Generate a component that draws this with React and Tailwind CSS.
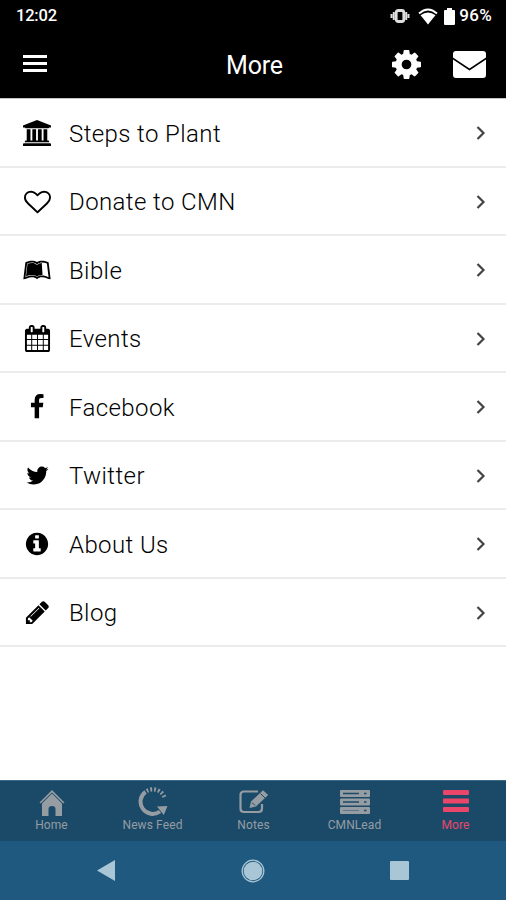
import React from "react";
import { FaLeanpub } from "react-icons/fa";

const icons = {
  bank: {
    box: "0 0 1920 1792",
    size: "w-[28px] h-[26px]",
    d: "M960 0l960 384v128h-128q0 26-20.5 45t-48.5 19h-1526q-28 0-48.5-19t-20.5-45h-128v-128zm-704 640h256v768h128v-768h256v768h128v-768h256v768h128v-768h256v768h59q28 0 48.5 19t20.5 45v64h-1664v-64q0-26 20.5-45t48.5-19h59v-768zm1595 960q28 0 48.5 19t20.5 45v128h-1920v-128q0-26 20.5-45t48.5-19h1782z",
  },
  heart: {
    box: "0 0 1792 1792",
    size: "w-[27px] h-[26px]",
    d: "M1664 596q0-81-21.5-143t-55-98.5-81.5-59.5-94-31-98-8-112 25.5-110.5 64-86.5 72-60 61.5q-18 22-49 22t-49-22q-24-28-60-61.5t-86.5-72-110.5-64-112-25.5-98 8-94 31-81.5 59.5-55 98.5-21.5 143q0 168 187 355l581 560 580-559q188-188 188-356zm128 0q0 221-229 450l-623 600q-18 18-44 18t-44-18l-624-602q-10-8-27.5-26t-55.5-65.5-68-97.5-53.5-121-23.5-138q0-220 127-344t351-124q62 0 126.5 21.5t120 58 95.5 68.5 76 68q36-36 76-68t95.5-68.5 120-58 126.5-21.5q224 0 351 124t127 344z",
  },
  calendar: {
    box: "0 0 1792 1792",
    size: "w-[27px] h-[27px]",
    d: "M192 1664h288v-288h-288v288zm352 0h320v-288h-320v288zm-352-352h288v-320h-288v320zm352 0h320v-320h-320v320zm-352-384h288v-288h-288v288zm736 736h320v-288h-320v288zm-384-736h320v-288h-320v288zm768 736h288v-288h-288v288zm-384-352h320v-320h-320v320zm-352-864v-288q0-13-9.5-22.5t-22.5-9.5h-64q-13 0-22.5 9.5t-9.5 22.5v288q0 13 9.5 22.5t22.5 9.5h64q13 0 22.5-9.5t9.5-22.5zm736 864h288v-320h-288v320zm-384-384h320v-288h-320v288zm384 0h288v-288h-288v288zm32-480v-288q0-13-9.5-22.5t-22.5-9.5h-64q-13 0-22.5 9.5t-9.5 22.5v288q0 13 9.5 22.5t22.5 9.5h64q13 0 22.5-9.5t9.5-22.5zm384-64v1280q0 52-38 90t-90 38h-1408q-52 0-90-38t-38-90v-1280q0-52 38-90t90-38h128v-96q0-66 47-113t113-47h64q66 0 113 47t47 113v96h384v-96q0-66 47-113t113-47h64q66 0 113 47t47 113v96h128q52 0 90 38t38 90z",
  },
  facebook: {
    box: "0 0 1792 1792",
    size: "w-[26px] h-[26px]",
    d: "M1343 12v264h-157q-86 0-116 36t-30 108v189h293l-39 296h-254v759h-306v-759h-255v-296h255v-218q0-186 104-288.5t277-102.5q147 0 228 12z",
  },
  twitter: {
    box: "0 0 1792 1792",
    size: "w-[25px] h-[25px]",
    d: "M1684 408q-67 98-162 167 1 14 1 42 0 130-38 259.5t-115.5 248.5-184.5 210.5-258 146-323 54.5q-271 0-496-145 35 4 78 4 225 0 401-138-105-2-188-64.5t-114-159.5q33 5 61 5 43 0 85-11-112-23-185.5-111.5t-73.5-205.5v-4q68 38 146 41-66-44-105-115t-39-154q0-88 44-163 121 149 294.5 238.5t371.5 99.5q-8-38-8-74 0-134 94.5-228.5t228.5-94.5q140 0 236 102 109-21 205-78-37 115-142 178 93-10 186-50z",
  },
  info: {
    box: "0 0 1792 1792",
    size: "w-[26px] h-[26px]",
    d: "M1152 1376v-160q0-14-9-23t-23-9h-96v-512q0-14-9-23t-23-9h-320q-14 0-23 9t-9 23v160q0 14 9 23t23 9h96v320h-96q-14 0-23 9t-9 23v160q0 14 9 23t23 9h448q14 0 23-9t9-23zm-128-896v-160q0-14-9-23t-23-9h-192q-14 0-23 9t-9 23v160q0 14 9 23t23 9h192q14 0 23-9t9-23zm640 416q0 209-103 385.5t-279.5 279.5-385.5 103-385.5-103-279.5-279.5-103-385.5 103-385.5 279.5-279.5 385.5-103 385.5 103 279.5 279.5 103 385.5z",
  },
  pencil: {
    box: "0 0 1792 1792",
    size: "w-[27px] h-[27px]",
    d: "M491 1536l91-91-235-235-91 91v107h128v128h107zm523-928q0-22-22-22-10 0-17 7l-542 542q-7 7-7 17 0 22 22 22 10 0 17-7l542-542q7-7 7-17zm-54-192l416 416-832 832h-416v-416zm683 96q0 53-37 90l-166 166-416-416 166-165q36-38 90-38 53 0 91 38l235 234q37 39 37 91z",
  },
  cog: {
    box: "128 128 1536 1536",
    size: "w-[29px] h-[29px]",
    d: "M1152 896q0-106-75-181t-181-75-181 75-75 181 75 181 181 75 181-75 75-181zm512-109v222q0 12-8 23t-20 13l-185 28q-19 54-39 91 35 50 107 138 10 12 10 25t-9 23q-27 37-99 108t-94 71q-12 0-26-9l-138-108q-44 23-91 38-16 136-29 186-7 28-36 28h-222q-14 0-24.5-8.5t-11.5-21.5l-28-184q-49-16-90-37l-141 107q-10 9-25 9-14 0-25-11-126-114-165-168-7-10-7-23 0-12 8-23 15-21 51-66.5t54-70.5q-27-50-41-99l-183-27q-13-2-21-12.5t-8-23.5v-222q0-12 8-23t19-13l186-28q14-46 39-92-40-57-107-138-10-12-10-24 0-10 9-23 26-36 98.5-107.5t94.5-71.5q13 0 26 10l138 107q44-23 91-38 16-136 29-186 7-28 36-28h222q14 0 24.5 8.5t11.5 21.5l28 184q49 16 90 37l142-107q9-9 24-9 13 0 25 10 129 119 165 170 7 8 7 22 0 12-8 23-15 21-51 66.5t-54 70.5q26 50 41 98l183 28q13 2 21 12.5t8 23.5z",
  },
};

const Icon = ({ name }) => {
  const icon = icons[name];
  return (
    <svg viewBox={icon.box} className={icon.size} fill="currentColor" preserveAspectRatio="none">
      <path d={icon.d} />
    </svg>
  );
};

const menu = [
  { label: "Steps to Plant", icon: <Icon name="bank" /> },
  { label: "Donate to CMN", icon: <Icon name="heart" /> },
  { label: "Bible", icon: <FaLeanpub className="w-[28px] h-[26px]" /> },
  { label: "Events", icon: <Icon name="calendar" /> },
  { label: "Facebook", icon: <Icon name="facebook" /> },
  { label: "Twitter", icon: <Icon name="twitter" /> },
  { label: "About Us", icon: <Icon name="info" /> },
  { label: "Blog", icon: <Icon name="pencil" /> },
];

const StatusBar = () => (
  <div className="flex h-8 items-center justify-between pl-[16px] pr-[14px] text-[16.5px] font-medium">
    <span className="tracking-[-0.2px]">12:02</span>
    <div className="flex items-center">
      <svg viewBox="0 0 20 14" className="w-5 h-[14px] mr-[8px]" fill="none" stroke="#ddd">
        <path d="M1.500 5v4M3.800 3v8M16.200 3v8M18.500 5v4" strokeWidth="2" />
        <rect x="6.200" y="1.500" width="7.600" height="11" rx="2" strokeWidth="2.800" />
      </svg>
      <svg viewBox="0 0 20 17" className="w-5 h-[17px] mr-[6px]">
        <path d="M1 5.500Q10-2.500 19 5.500" fill="none" stroke="#fff" strokeWidth="1.800" />
        <path d="M2.500 7.300Q10 1.500 17.500 7.300L10 16.500Z" fill="#fff" />
      </svg>
      <svg viewBox="0 0 11 17" className="w-[11px] h-[17px] mr-[4px]" fill="#fff">
        <path d="M3 0h5v2h2a1 1 0 0 1 1 1v13a1 1 0 0 1-1 1H1a1 1 0 0 1-1-1V3a1 1 0 0 1 1-1h2z" />
      </svg>
      <span className="text-[17px] tracking-[0.3px]">96%</span>
    </div>
  </div>
);

const Header = () => (
  <div className="grid h-[66px] grid-cols-[1fr_auto_1fr] items-center pl-[23px] pr-5">
    <div className="-mt-[3px] flex w-6 flex-col gap-1">
      <span className="h-[3px] bg-white" />
      <span className="h-[3px] bg-white" />
      <span className="h-[3px] bg-white" />
    </div>
    <h1 className="pt-[2px] text-[25px] leading-8 tracking-[-0.2px]">More</h1>
    <div className="-mt-[2px] flex items-center justify-end gap-8">
      <Icon name="cog" />
      <svg viewBox="0 0 33 27" className="w-[33px] h-[27px]" fill="#fff">
        <path d="M3 0h27a3 3 0 0 1 3 3v3.500L16.500 17.500 0 6.500V3a3 3 0 0 1 3-3z" />
        <path d="M0 8.500L16.500 19.500 33 8.500V24a3 3 0 0 1-3 3H3a3 3 0 0 1-3-3z" />
      </svg>
    </div>
  </div>
);

const HomeIcon = () => (
  <svg viewBox="0 0 26 26" className="w-[26px] h-[26px]" fill="currentColor">
    <path d="M13 0L25.500 12.500l-1.200 1.100L13 2.600 1.700 13.600.5 12.500z" />
    <path d="M13 3.600l10 9.900V26h-6.500v-7q0-3-3.500-3t-3.500 3v7H3V13.500z" />
  </svg>
);

const FeedIcon = () => (
  <svg viewBox="0 0 30 31" className="-mt-1 w-[30px] h-[31px]" fill="none" stroke="currentColor">
    <path d="M7.500 5.800A12.200 12.200 0 0 0 22 25.500" strokeWidth="4" />
    <path d="M19 20.500l10.500-.5-3.700 9z" fill="currentColor" stroke="none" />
    <path d="M8.800 5A12.200 12.200 0 0 1 26.800 12.500" strokeWidth="4.200" strokeDasharray="1.800 2" />
  </svg>
);

const NotesIcon = () => (
  <svg viewBox="0 0 30 24" className="w-[30px] h-6" fill="none" stroke="currentColor">
    <path d="M19 1.500H5Q1.500 1.500 1.500 5v13.500Q1.500 22 5 22h14.500Q23 22 23 18.500V14" strokeWidth="2.200" />
    <path d="M10.500 18l1.500-6.500L24 .3 29.200 5 17 16.500z" fill="currentColor" stroke="none" />
    <path d="M21.500 3.500l4.500 4.500M13 12.500l3 3" stroke="#1b4a69" strokeWidth="1" />
  </svg>
);

const ServerIcon = () => (
  <svg viewBox="0 0 30 24" className="w-[30px] h-6" fill="currentColor">
    <rect width="30" height="7" rx="1" />
    <rect y="8.500" width="30" height="7" rx="1" />
    <rect y="17" width="30" height="7" rx="1" />
    <path d="M3 3.500h16M3 12h16M24 3.500h2.500M24 12h2.500M24 20.500h2.500" stroke="#1b4a69" strokeWidth="1.500" />
    <path d="M3 20.500h16" stroke="#5b788c" strokeWidth="1" />
  </svg>
);

const MoreIcon = () => (
  <svg viewBox="0 0 26 22" className="w-[26px] h-[22px]" fill="currentColor">
    <rect width="26" height="5" rx="1" />
    <rect y="8.500" width="26" height="5" rx="1" />
    <rect y="17" width="26" height="5" rx="1" />
  </svg>
);

const tabs = [
  { label: "Home", icon: <HomeIcon /> },
  { label: "News Feed", icon: <FeedIcon /> },
  { label: "Notes", icon: <NotesIcon /> },
  { label: "CMNLead", icon: <ServerIcon /> },
  { label: "More", icon: <MoreIcon />, active: true },
];

const App = () => {
  return (
    <div className="flex h-[900px] w-[506px] flex-col overflow-hidden bg-white font-['Roboto',sans-serif]">
      <div className="h-[99px] border-b border-[#c9c4c6] bg-black text-white">
        <StatusBar />
        <Header />
      </div>

      <div className="flex-1 text-black">
        {menu.map((item, index) => (
          <div className="flex h-[68.5px] items-center border-b-2 border-[#ebebeb] pr-[20px]" key={index}>
            <div className="flex w-[74px] justify-center pt-[2px]">{item.icon}</div>
            <p className="-ml-[5px] flex-1 pt-[3px] text-[24px] font-light tracking-[0.4px]">{item.label}</p>
            <svg viewBox="0 0 10 14" className="mt-[2px] w-[10px] h-[14px]" fill="none" stroke="#444" strokeWidth="2.200">
              <path d="M1.500 1l6 6-6 6" />
            </svg>
          </div>
        ))}
      </div>

      <div className="grid h-[61px] grid-cols-5 border-t border-[#406a88] bg-[#1b4a69] pl-[1px] text-[#959ca2]">
        {tabs.map((tab, index) => (
          <div className={tab.active ? "flex flex-col items-center text-[#ea4669]" : "flex flex-col items-center"} key={index}>
            <div className="flex h-[37px] items-start justify-center pt-[9px]">{tab.icon}</div>
            <span className="text-[12px] leading-[15px] tracking-[0.1px]">{tab.label}</span>
          </div>
        ))}
      </div>

      <div className="flex h-[59px] items-center justify-between bg-[#20597f] pl-[97px] pr-[97px] text-[#a9c6d6]">
        <svg viewBox="0 0 18 21" className="w-[18px] h-[21px]" fill="currentColor">
          <path d="M0 10.500L18 0v21z" />
        </svg>
        <svg viewBox="0 0 24 24" className="ml-[1px] w-6 h-6" fill="currentColor">
          <circle cx="12" cy="12" r="9.300" />
          <circle cx="12" cy="12" r="10.800" fill="none" stroke="currentColor" strokeWidth="1.300" />
        </svg>
        <div className="h-[19px] w-[19px] rounded-[1px] bg-[#a9c6d6]" />
      </div>
    </div>
  );
};

export default App;
